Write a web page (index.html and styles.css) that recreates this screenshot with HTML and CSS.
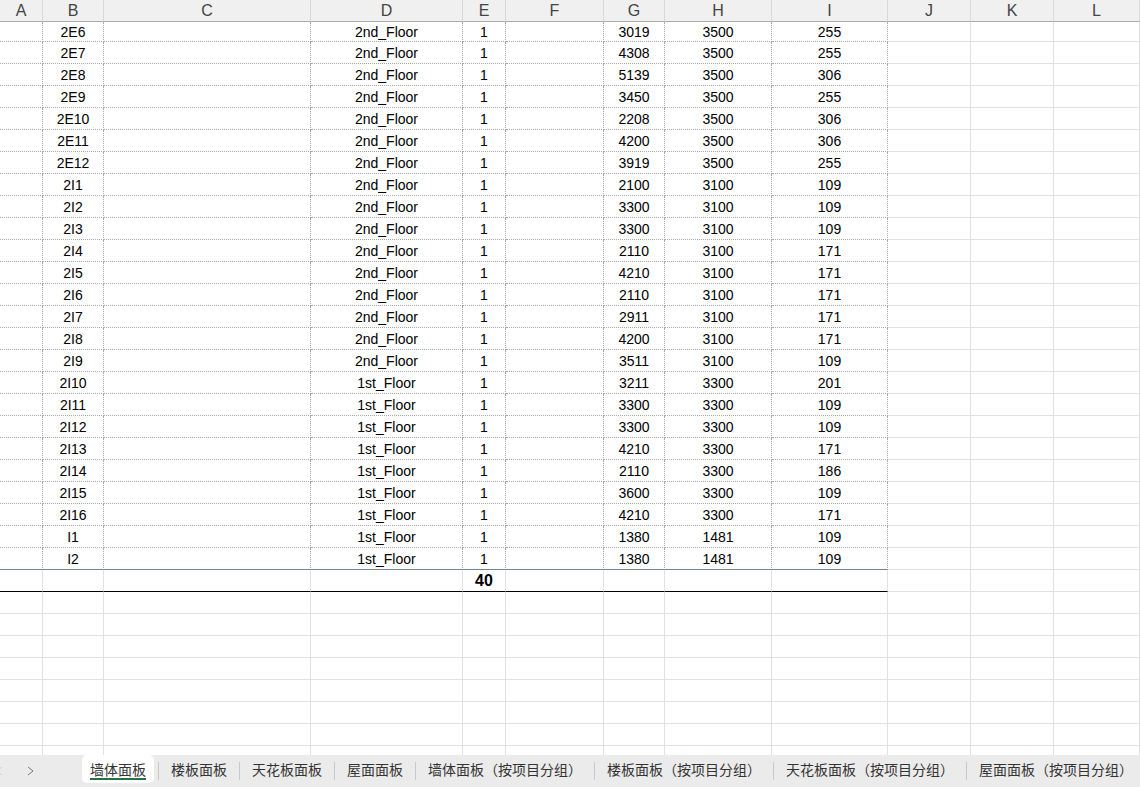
FILE: index.html
```html
<!DOCTYPE html>
<html lang="zh-CN">
<head>
    <meta charset="UTF-8">
    <meta name="viewport" content="width=device-width, initial-scale=1.0">
    <title>墙体面板</title>
    <link rel="stylesheet" href="styles.css">
</head>
<body>
    <div class="sheet" id="sheet"></div>

    <div class="tabbar">
        <div class="nav">
            <svg width="78" height="32" viewBox="0 0 78 32">
                <polyline points="2,12 -3,16 2,20" fill="none" stroke="#cfcfcf" stroke-width="1"/>
                <polyline points="28,12 33,16 28,20" fill="none" stroke="#7a7a7a" stroke-width="1"/>
            </svg>
        </div>
        <div class="tab active"><span class="label">墙体面板</span></div>
        <span class="sep"></span>
        <div class="tab"><span class="label">楼板面板</span></div>
        <span class="sep"></span>
        <div class="tab"><span class="label">天花板面板</span></div>
        <span class="sep"></span>
        <div class="tab"><span class="label">屋面面板</span></div>
        <span class="sep"></span>
        <div class="tab"><span class="label">墙体面板（按项目分组）</span></div>
        <span class="sep"></span>
        <div class="tab"><span class="label">楼板面板（按项目分组）</span></div>
        <span class="sep"></span>
        <div class="tab"><span class="label">天花板面板（按项目分组）</span></div>
        <span class="sep"></span>
        <div class="tab"><span class="label">屋面面板（按项目分组）</span></div>
    </div>

    <script>
        const columns = ['A', 'B', 'C', 'D', 'E', 'F', 'G', 'H', 'I', 'J', 'K', 'L'];

        // mark, level, width, height, thickness
        const panels = [
            ['2E6', '2nd_Floor', 3019, 3500, 255],
            ['2E7', '2nd_Floor', 4308, 3500, 255],
            ['2E8', '2nd_Floor', 5139, 3500, 306],
            ['2E9', '2nd_Floor', 3450, 3500, 255],
            ['2E10', '2nd_Floor', 2208, 3500, 306],
            ['2E11', '2nd_Floor', 4200, 3500, 306],
            ['2E12', '2nd_Floor', 3919, 3500, 255],
            ['2I1', '2nd_Floor', 2100, 3100, 109],
            ['2I2', '2nd_Floor', 3300, 3100, 109],
            ['2I3', '2nd_Floor', 3300, 3100, 109],
            ['2I4', '2nd_Floor', 2110, 3100, 171],
            ['2I5', '2nd_Floor', 4210, 3100, 171],
            ['2I6', '2nd_Floor', 2110, 3100, 171],
            ['2I7', '2nd_Floor', 2911, 3100, 171],
            ['2I8', '2nd_Floor', 4200, 3100, 171],
            ['2I9', '2nd_Floor', 3511, 3100, 109],
            ['2I10', '1st_Floor', 3211, 3300, 201],
            ['2I11', '1st_Floor', 3300, 3300, 109],
            ['2I12', '1st_Floor', 3300, 3300, 109],
            ['2I13', '1st_Floor', 4210, 3300, 171],
            ['2I14', '1st_Floor', 2110, 3300, 186],
            ['2I15', '1st_Floor', 3600, 3300, 109],
            ['2I16', '1st_Floor', 4210, 3300, 171],
            ['I1', '1st_Floor', 1380, 1481, 109],
            ['I2', '1st_Floor', 1380, 1481, 109]
        ];

        const sheet = document.getElementById('sheet');

        function addCell(text, classes) {
            const cell = document.createElement('div');
            cell.className = 'cell ' + classes;
            cell.textContent = text;
            sheet.appendChild(cell);
        }

        columns.forEach(name => addCell(name, 'head'));

        panels.forEach((panel, i) => {
            const last = i === panels.length - 1;
            const values = ['', panel[0], '', panel[1], 1, '', panel[2], panel[3], panel[4], '', '', ''];
            values.forEach((value, c) => {
                let classes = '';
                if (c < 9) classes = last ? 'dotted last' : 'dotted';
                addCell(value, classes);
            });
        });

        // count row
        columns.forEach((name, c) => addCell(c === 4 ? panels.length + 15 : '', c < 9 ? 'total' : ''));

        for (let r = 0; r < 8; r++) {
            columns.forEach(() => addCell('', ''));
        }
    </script>
</body>
</html>
```

FILE: styles.css
```css
body {
    margin: 0;
    padding: 0;
    background-color: #fff;
    overflow: hidden;
}

.sheet {
    display: grid;
    grid-template-columns: 43px 61px 207px 152px 43px 98px 61px 107px 116px 83px 83px 86px;
    grid-template-rows: 22px 20px;
    grid-auto-rows: 22px;
    height: 755px;
    overflow: hidden;
}

.cell {
    box-sizing: border-box;
    display: flex;
    align-items: center;
    justify-content: center;
    border-right: 1px solid #e1e1e1;
    border-bottom: 1px solid #e1e1e1;
    font-family: "Liberation Sans", Arial, sans-serif;
    font-size: 14px;
    color: #000;
    white-space: nowrap;
    overflow: hidden;
}

.cell.head {
    background-color: #f0f0f0;
    color: #444;
    font-size: 16px;
    border-right-color: #d9d9d9;
    border-bottom-color: #ababab;
}

.cell.dotted {
    border-right: 1px dotted #a8a8a8;
    border-bottom: 1px dotted #a8a8a8;
}

.cell.last {
    border-bottom: 1px solid #6e8596;
}

.cell.total {
    border-bottom: 1px solid #000;
    font-size: 16px;
    font-weight: bold;
}

.tabbar {
    display: flex;
    align-items: flex-start;
    height: 32px;
    background-color: #ebebeb;
    font-family: "Noto Sans CJK SC", sans-serif;
    font-size: 14px;
    color: #333;
}

.nav {
    width: 78px;
    height: 32px;
    flex-shrink: 0;
}

.nav svg {
    display: block;
}

.tab {
    padding: 0 4px;
    flex-shrink: 0;
}

.label {
    display: flex;
    align-items: center;
    height: 28px;
    padding: 0 8px;
    line-height: 20px;
    white-space: nowrap;
}

.tab.active .label {
    border-radius: 5px;
    background:
        linear-gradient(#217346, #217346) 8px 23px / calc(100% - 16px) 2px no-repeat,
        #fff;
}

.sep {
    align-self: center;
    width: 1px;
    height: 18px;
    background-color: #c9c9c9;
    flex-shrink: 0;
}
```
